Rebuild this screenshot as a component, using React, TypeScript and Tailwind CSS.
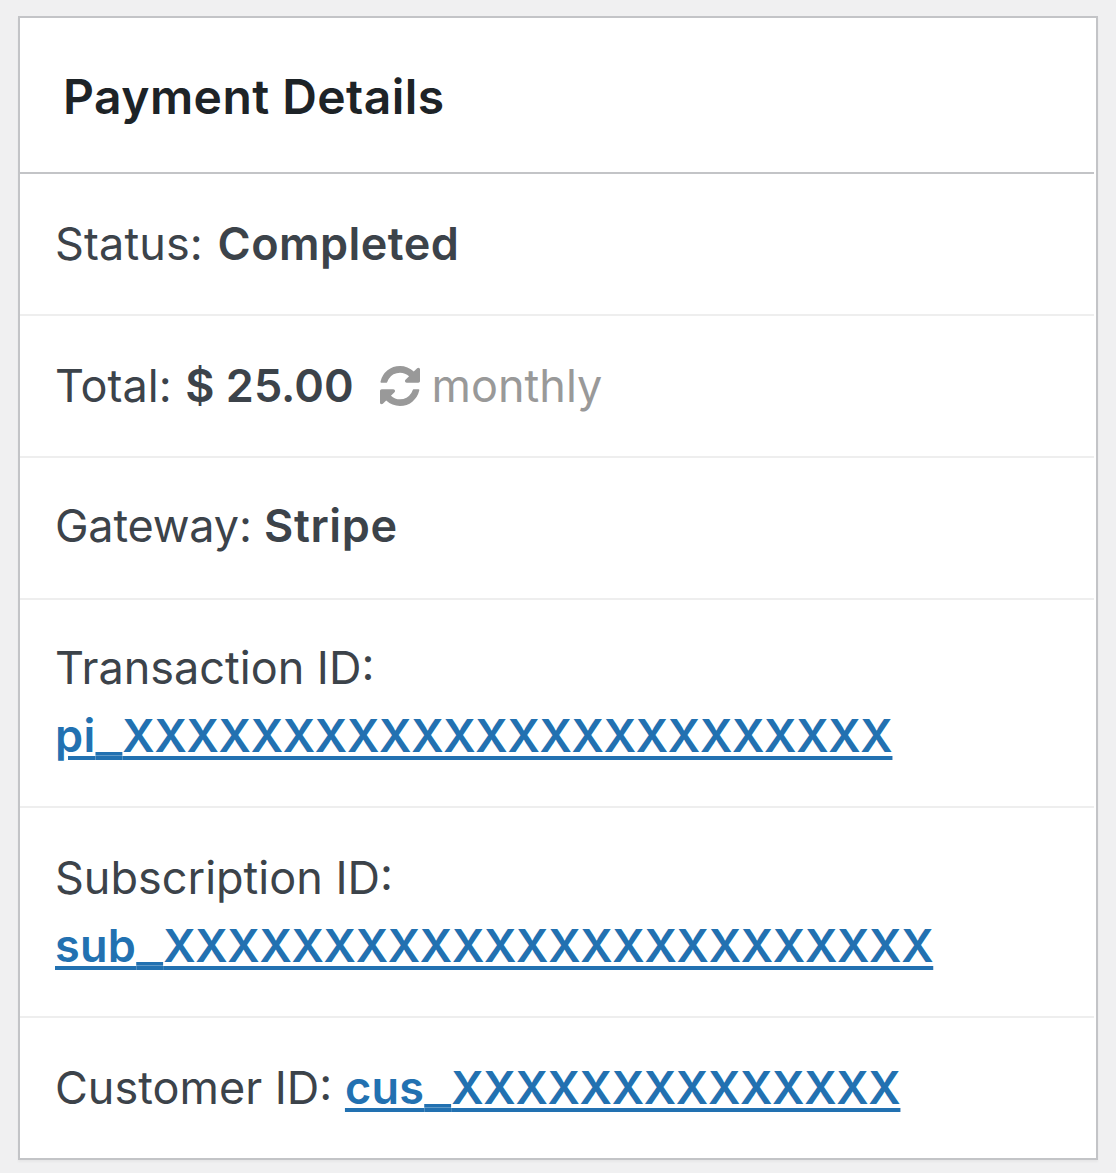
import React from 'react';

const RefreshIcon: React.FC<{ className?: string }> = ({ className }) => (
  <svg className={className} viewBox="0 0 1536 1536" fill="currentColor" aria-hidden="true">
    <path d="M1511 928q0 5-1 7-64 268-268 434.500T764 1536q-146 0-282.500-55T238 1324l-129 129q-19 19-45 19t-45-19-19-45V960q0-26 19-45t45-19h448q26 0 45 19t19 45-19 45l-137 137q71 66 161 102t187 36q134 0 250-65t186-179q11-17 53-117 8-23 30-23h192q13 0 22.500 9.500t9.500 22.500zm25-800v448q0 26-19 45t-45 19h-448q-26 0-45-19t-19-45 19-45l138-138Q969 256 768 256q-134 0-250 65T332 500q-11 17-53 117-8 23-30 23H50q-13 0-22.500-9.500T18 608v-7q65-268 270-434.500T768 0q146 0 284 55.500T1297 212l130-129q19-19 45-19t45 19 19 45z" />
  </svg>
);

interface RowProps {
  label: string;
  className: string;
  children: React.ReactNode;
}

const Row: React.FC<RowProps> = ({ label, className, children }) => (
  <div className={`mr-0.5 border-b-2 border-[#eeeeee] pl-[35px] leading-[68px] whitespace-nowrap last:border-b-0 ${className}`}>
    {label}: {children}
  </div>
);

const IdLink: React.FC<{ prefix: string; id: string }> = ({ prefix, id }) => (
  <a href="#" className="font-semibold text-[#2271b1] underline decoration-4 underline-offset-[4px]">
    <span className="tracking-[0.3px]">{prefix}</span>
    <span className="text-[60px] leading-[0] font-light">_</span>
    <span className="tracking-[-0.3px]">{id}</span>
  </a>
);

const App: React.FC = () => {
  return (
    <div className="h-[1173px] bg-[#f0f0f1] pt-4 pl-[18px] font-['Inter',sans-serif]">
      <div className="h-[1144px] w-[1080px] border-2 border-[#c3c4c7] bg-white text-[45px] text-[#3c434a] shadow-[0_2px_2px_rgba(0,0,0,0.04)]">
        <h2 className="mr-0.5 h-[156px] border-b-2 border-[#c3c4c7] pt-[45px] pl-[43px] text-[48px] leading-[68px] font-semibold tracking-[0.45px] text-[#1d2327]">
          Payment Details
        </h2>
        <Row label="Status" className="h-[142px] pt-9 tracking-[0.1px]">
          <strong className="ml-0.5 font-semibold tracking-[0.45px]">Completed</strong>
        </Row>
        <Row label="Total" className="h-[142px] pt-9">
          <strong className="ml-px font-semibold">$ 25.00</strong>
          <span className="ml-[26px] text-[#999999]">
            <RefreshIcon className="mr-3 inline-block size-10 align-[-4px]" />
            monthly
          </span>
        </Row>
        <Row label="Gateway" className="h-[142px] pt-[34px] tracking-[-0.2px]">
          <strong className="font-semibold tracking-[0.6px]">Stripe</strong>
        </Row>
        <Row label="Transaction ID" className="h-[208px] pt-[34px]">
          <br />
          <IdLink prefix="pi" id="XXXXXXXXXXXXXXXXXXXXXXXX" />
        </Row>
        <Row label="Subscription ID" className="h-[210px] pt-9">
          <br />
          <IdLink prefix="sub" id="XXXXXXXXXXXXXXXXXXXXXXXX" />
        </Row>
        <Row label="Customer ID" className="h-[140px] pt-9">
          <IdLink prefix="cus" id="XXXXXXXXXXXXXX" />
        </Row>
      </div>
    </div>
  );
};

export default App;
